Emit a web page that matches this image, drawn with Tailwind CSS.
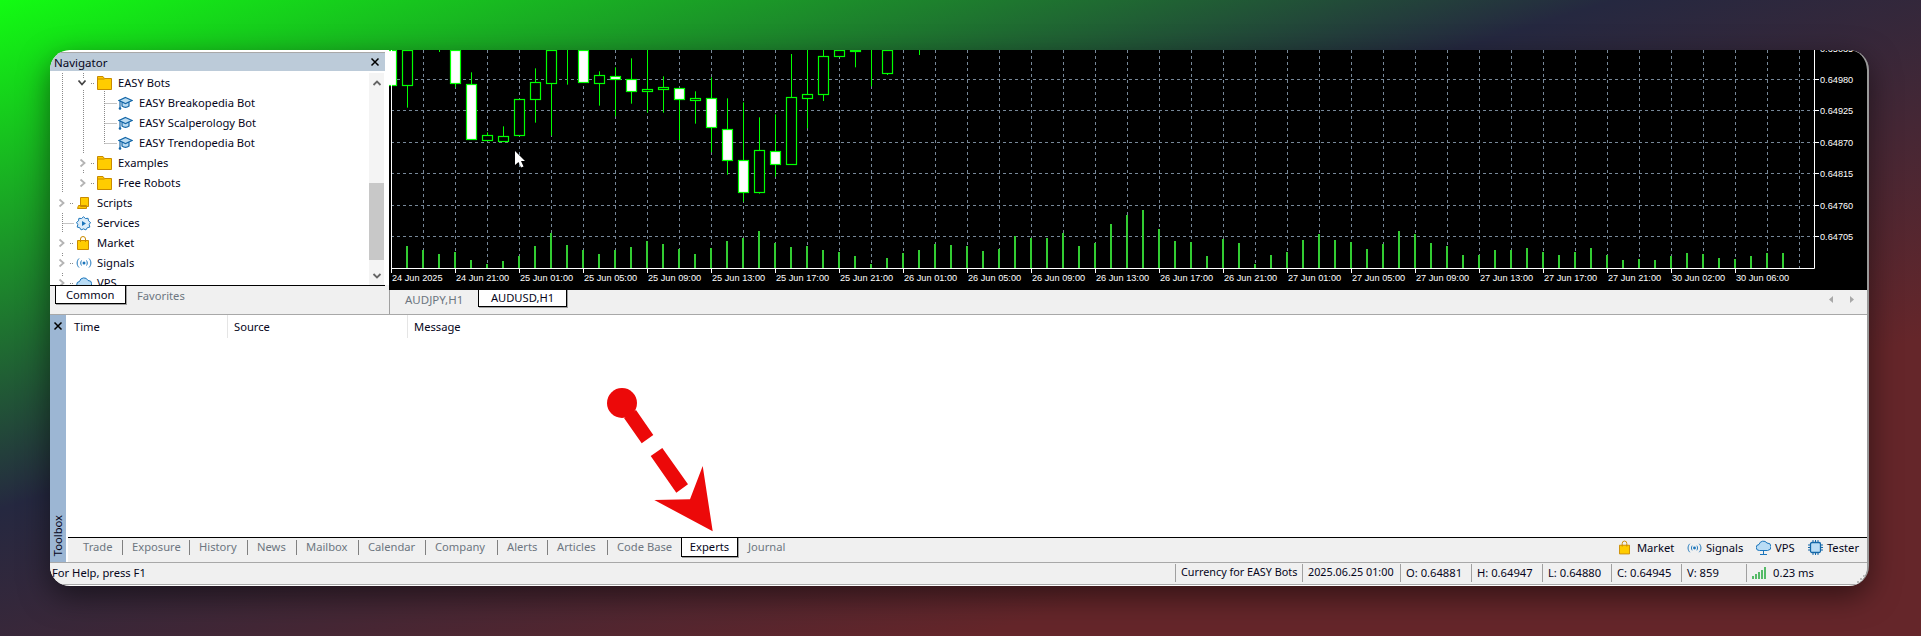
<!DOCTYPE html>
<html lang="en">
<head>
    <meta charset="UTF-8">
    <title>MetaTrader Experts Tab</title>
    <script src="https://cdn.jsdelivr.net/npm/@tailwindcss/browser@4"></script>
</head>
<body class="w-[1921px] h-[636px] overflow-hidden pt-[50px] pl-[50px] font-['Noto_Sans',sans-serif] text-[11.2px] leading-none text-[#05051a] bg-[linear-gradient(162.5deg,#12fc12_0%,#252840_41%,#65262a_76%,#65262a_100%)]">

    <div class="relative w-[1819px] h-[536px] rounded-[20px] overflow-hidden bg-white flex flex-col border-r-2 border-[#9a9a9a] shadow-[0_10px_30px_rgba(0,0,0,0.5)]">

        <!-- top: navigator + chart -->
        <div class="flex h-[264px]">
            <div class="w-[335px] flex flex-col pt-[2px] shrink-0">
                <div class="border-t border-[#a8a8a8] h-[19px] bg-[#bccbd9] flex items-center justify-between pl-[4px] pr-[5px]">
                    <span class="text-[11.5px] mt-px">Navigator</span>
                    <svg class="w-[10px] h-[10px]" viewBox="0 0 10 10"><path d="M1.500 1.500l7 7M8.500 1.500l-7 7" stroke="#000" stroke-width="1.500"/></svg>
                </div>
                <div class="relative h-[212px] flex overflow-hidden mt-[2px]">
                    <div class="flex-1 flex flex-col">
                        <div class="h-5 flex items-center pl-[27px] shrink-0">
                            <svg class="w-[10px] h-[8px] mr-[10px]" viewBox="0 0 10 8"><path d="M1.500 1.500L5 5.500l3.500-4" fill="none" stroke="#444" stroke-width="1.800"/></svg>
                            <svg class="w-[15px] h-[14px] mr-[6px]" viewBox="0 0 15 14"><path d="M.5 13.500V.5h5.500l1.500 2h7v11zM.5 3h7" fill="#ffcc00" stroke="#c98a00"/></svg>
                            <span>EASY Bots</span>
                        </div>
                        <div class="h-5 flex items-center pl-[68px] shrink-0">
                            <svg class="w-[15px] h-[14px] mr-[6px]" viewBox="0 0 15 14"><path d="M7.500 1.500l6.500 3-6.500 3-6.500-3zM4 6.500v3.500c2 1.500 5 1.500 7 0V6.500M2 5v7" fill="#bcdcf2" stroke="#1467a8" stroke-width="1.200"/><circle cx="2" cy="12.500" r="1.300" fill="#1467a8"/></svg>
                            <span>EASY Breakopedia Bot</span>
                        </div>
                        <div class="h-5 flex items-center pl-[68px] shrink-0">
                            <svg class="w-[15px] h-[14px] mr-[6px]" viewBox="0 0 15 14"><path d="M7.500 1.500l6.500 3-6.500 3-6.500-3zM4 6.500v3.500c2 1.500 5 1.500 7 0V6.500M2 5v7" fill="#bcdcf2" stroke="#1467a8" stroke-width="1.200"/><circle cx="2" cy="12.500" r="1.300" fill="#1467a8"/></svg>
                            <span>EASY Scalperology Bot</span>
                        </div>
                        <div class="h-5 flex items-center pl-[68px] shrink-0">
                            <svg class="w-[15px] h-[14px] mr-[6px]" viewBox="0 0 15 14"><path d="M7.500 1.500l6.500 3-6.500 3-6.500-3zM4 6.500v3.500c2 1.500 5 1.500 7 0V6.500M2 5v7" fill="#bcdcf2" stroke="#1467a8" stroke-width="1.200"/><circle cx="2" cy="12.500" r="1.300" fill="#1467a8"/></svg>
                            <span>EASY Trendopedia Bot</span>
                        </div>
                        <div class="h-5 flex items-center pl-[29px] shrink-0">
                            <svg class="w-[8px] h-[10px] mr-[10px]" viewBox="0 0 8 10"><path d="M1.500 1.500L5.500 5l-4 3.500" fill="none" stroke="#b4b4b4" stroke-width="1.800"/></svg>
                            <svg class="w-[15px] h-[14px] mr-[6px]" viewBox="0 0 15 14"><path d="M.5 13.500V.5h5.500l1.500 2h7v11zM.5 3h7" fill="#ffcc00" stroke="#c98a00"/></svg>
                            <span>Examples</span>
                        </div>
                        <div class="h-5 flex items-center pl-[29px] shrink-0">
                            <svg class="w-[8px] h-[10px] mr-[10px]" viewBox="0 0 8 10"><path d="M1.500 1.500L5.500 5l-4 3.500" fill="none" stroke="#b4b4b4" stroke-width="1.800"/></svg>
                            <svg class="w-[15px] h-[14px] mr-[6px]" viewBox="0 0 15 14"><path d="M.5 13.500V.5h5.500l1.500 2h7v11zM.5 3h7" fill="#ffcc00" stroke="#c98a00"/></svg>
                            <span>Free Robots</span>
                        </div>
                        <div class="h-5 flex items-center pl-[8px] shrink-0">
                            <svg class="w-[8px] h-[10px] mr-[11px]" viewBox="0 0 8 10"><path d="M1.500 1.500L5.500 5l-4 3.500" fill="none" stroke="#b4b4b4" stroke-width="1.800"/></svg>
                            <svg class="w-[12px] h-[12px] mr-[8px]" viewBox="0 0 12 12"><path d="M3.500.5h8v9h-8zM.5 11.500l1-3h8v3z" fill="#ffcc00" stroke="#c98a00" stroke-linejoin="round"/></svg>
                            <span>Scripts</span>
                        </div>
                        <div class="h-5 flex items-center pl-[26px] shrink-0">
                            <svg class="w-[15px] h-[15px] mr-[6px]" viewBox="0 0 15 15"><path d="M7.500 .8l2 1.700 2.600-.2.400 2.500 2 1.700-1.300 2 .6 2.600-2.500.6-1.400 2.200-2.400-1-2.400 1-1.400-2.200-2.500-.6.600-2.600-1.300-2 2-1.700.4-2.500 2.600.2z" fill="#dcedf9" stroke="#1b75bb"/><path d="M6 5v5l4-2.500z" fill="#1b75bb"/></svg>
                            <span>Services</span>
                        </div>
                        <div class="h-5 flex items-center pl-[8px] shrink-0">
                            <svg class="w-[8px] h-[10px] mr-[11px]" viewBox="0 0 8 10"><path d="M1.500 1.500L5.500 5l-4 3.500" fill="none" stroke="#b4b4b4" stroke-width="1.800"/></svg>
                            <svg class="w-[12px] h-[14px] mr-[8px]" viewBox="0 0 12 14"><path d="M.5 4.500h11v9H.5z" fill="#ffcc00" stroke="#c98a00"/><path d="M3.500 6V3a2.500 2.500 0 015 0v3" fill="none" stroke="#c98a00"/></svg>
                            <span>Market</span>
                        </div>
                        <div class="h-5 flex items-center pl-[8px] shrink-0">
                            <svg class="w-[8px] h-[10px] mr-[10px]" viewBox="0 0 8 10"><path d="M1.500 1.500L5.500 5l-4 3.500" fill="none" stroke="#b4b4b4" stroke-width="1.800"/></svg>
                            <svg class="w-[16px] h-[10px] mr-[5px]" viewBox="0 0 16 10"><path d="M3 .5C.5 3 .5 7 3 9.500M5.500 2.500c-1 1.500-1 3.500 0 5M13 .5c2.500 2.500 2.500 6.500 0 9M10.500 2.500c1 1.500 1 3.500 0 5" fill="none" stroke="#1b75bb"/><circle cx="8" cy="5" r="1.500" fill="#1b75bb"/></svg>
                            <span>Signals</span>
                        </div>
                        <div class="h-5 flex items-center pl-[8px] shrink-0">
                            <svg class="w-[8px] h-[10px] mr-[10px]" viewBox="0 0 8 10"><path d="M1.500 1.500L5.500 5l-4 3.500" fill="none" stroke="#b4b4b4" stroke-width="1.800"/></svg>
                            <svg class="w-[16px] h-[14px] mr-[5px]" viewBox="0 0 16 14"><path d="M4 11.500a3 3 0 01-.5-6 4.500 4.500 0 018.500-1 3.500 3.500 0 01.500 7z" fill="#b9dcf5" stroke="#1b75bb"/></svg>
                            <span>VPS</span>
                        </div>
                    </div>

                    <!-- scrollbar -->
                    <div class="w-[15px] mr-px bg-[#f4f4f4] flex flex-col items-center shrink-0">
                        <svg class="w-[10px] h-[8px] mt-[6px] shrink-0" viewBox="0 0 10 8"><path d="M1.500 6L5 2.500 8.500 6" fill="none" stroke="#666" stroke-width="1.800"/></svg>
                        <div class="w-full h-[77px] bg-[#c8c8c8] mt-[96px] shrink-0"></div>
                        <svg class="w-[10px] h-[8px] mt-auto mb-[5px] shrink-0" viewBox="0 0 10 8"><path d="M1.500 2L5 5.500 8.500 2" fill="none" stroke="#666" stroke-width="1.800"/></svg>
                    </div>

                    <!-- tree lines -->
                    <svg class="absolute left-0 top-0 w-[335px] h-[212px] pointer-events-none" viewBox="50 73 335 212">
                        <path d="M62.500 73V193M62.500 213V233M62.500 253V257M62.500 273V277M62.500 223.500H74M83.500 73V78M83.500 90V153M83.500 170V174M104.500 91V143.500M104.500 103.500H117M104.500 123.500H117M104.500 143.500H117M91 83.500H94M91 163.500H94M91 183.500H94M70 203.500H73M70 243.500H73M70 263.500H73M70 283.500H73" stroke="#8a8a8a" stroke-dasharray="1 1" fill="none"/>
                    </svg>
                </div>
                <div class="h-[29px] border-t border-black bg-[#f0f0f0] flex items-start pl-[5px] shrink-0">
                    <div class="w-[71px] h-[19px] -mt-px bg-white border border-black shadow-[1px_1px_0_#a0a0a0] pl-[10px] flex items-center">Common</div>
                    <div class="pl-[11px] h-[19px] flex items-center text-[#6d7680]">Favorites</div>
                </div>
            </div>

            <div class="w-[4px] shrink-0 flex flex-col">
                <div class="flex-1"></div>
                <div class="h-[29px] bg-[#f0f0f0]"></div>
            </div>

            <!-- chart + chart tabs -->
            <div class="flex-1 flex flex-col min-w-0">
                <div class="h-[240px] bg-black overflow-hidden shrink-0">
                    <svg id="chart" class="block" width="1478" height="240" viewBox="389 50 1478 240"></svg>
                </div>
                <div class="flex-1 bg-[#f0f0f0] border-l border-[#a0a0a0] flex items-start relative">
                    <span class="ml-[15px] mt-[4px] text-[#6d7680] w-[73px] text-[11.5px]">AUDJPY,H1</span>
                    <div class="w-[89px] h-[18px] -mt-px bg-white border border-black shadow-[1px_1px_0_#a0a0a0] flex items-center justify-center">AUDUSD,H1</div>
                    <div class="ml-auto flex gap-[17px] mr-[13px] mt-[6px]">
                        <svg class="w-[4px] h-[7px]" viewBox="0 0 4 7"><path d="M4 0v7L0 3.500z" fill="#a8a8a8"/></svg>
                        <svg class="w-[4px] h-[7px]" viewBox="0 0 4 7"><path d="M0 0v7l4-3.500z" fill="#a8a8a8"/></svg>
                    </div>
                </div>
            </div>
        </div>

        <!-- toolbox -->
        <div class="flex h-[248px] border-t border-[#a8a8a8] shrink-0">
            <div class="w-[16px] bg-[#9cb6d3] flex flex-col items-center justify-between shrink-0">
                <svg class="w-[10px] h-[10px] mt-[6px]" viewBox="0 0 10 10"><path d="M1.500 1.500l7 7M8.500 1.500l-7 7" stroke="#000" stroke-width="1.500"/></svg>
                <span class="[writing-mode:vertical-rl] rotate-180 mb-[6px]">Toolbox</span>
            </div>
            <div class="flex-1 flex flex-col min-w-0">
                <div class="h-[23px] flex items-center shrink-0">
                    <span class="w-[162px] h-full flex items-center pl-[8px] border-r border-[#e5e5e5]">Time</span>
                    <span class="w-[180px] h-full flex items-center pl-[6px] border-r border-[#e5e5e5]">Source</span>
                    <span class="pl-[6px]">Message</span>
                </div>
                <div class="flex-1"></div>
                <div class="h-[25px] ml-[2px] border-t border-black bg-[#f0f0f0] flex items-start shrink-0 pl-[15px] pt-px text-[#6d7680]">
                    <span class="w-[39px] h-[15px] flex items-center">Trade</span><i class="w-px h-[15px] mt-px bg-[#808080] mr-[9px]"></i>
                    <span class="w-[57px] h-[15px] flex items-center">Exposure</span><i class="w-px h-[15px] mt-px bg-[#808080] mr-[9px]"></i>
                    <span class="w-[48px] h-[15px] flex items-center">History</span><i class="w-px h-[15px] mt-px bg-[#808080] mr-[9px]"></i>
                    <span class="w-[39px] h-[15px] flex items-center">News</span><i class="w-px h-[15px] mt-px bg-[#808080] mr-[9px]"></i>
                    <span class="w-[52px] h-[15px] flex items-center">Mailbox</span><i class="w-px h-[15px] mt-px bg-[#808080] mr-[9px]"></i>
                    <span class="w-[57px] h-[15px] flex items-center">Calendar</span><i class="w-px h-[15px] mt-px bg-[#808080] mr-[9px]"></i>
                    <span class="w-[62px] h-[15px] flex items-center">Company</span><i class="w-px h-[15px] mt-px bg-[#808080] mr-[9px]"></i>
                    <span class="w-[40px] h-[15px] flex items-center">Alerts</span><i class="w-px h-[15px] mt-px bg-[#808080] mr-[9px]"></i>
                    <span class="w-[50px] h-[15px] flex items-center">Articles</span><i class="w-px h-[15px] mt-px bg-[#808080] mr-[9px]"></i>
                    <span class="w-[64px] h-[15px] flex items-center">Code Base</span>
                    <div class="w-[57px] h-[20px] -mt-[2px] bg-white border border-black shadow-[1px_1px_0_#a0a0a0] flex items-center justify-center text-[#05051a]">Experts</div>
                    <span class="ml-[10px] h-[15px] flex items-center">Journal</span>
                    <div class="ml-auto flex items-center h-[17px] text-[#05051a] pr-[8px]">
                        <svg class="w-[11px] h-[15px] mr-[7px]" viewBox="0 0 12 15"><path d="M.5 5h11v9.500H.5z" fill="#ffcc00" stroke="#c98a00"/><path d="M3.500 6.500V3a2.500 2.500 0 015 0v3.500" fill="none" stroke="#c98a00"/></svg>
                        <span class="w-[50px]">Market</span>
                        <svg class="w-[15px] h-[10px] mr-[4px]" viewBox="0 0 16 10"><path d="M3 .5C.5 3 .5 7 3 9.500M5.500 2.500c-1 1.500-1 3.500 0 5M13 .5c2.500 2.500 2.500 6.500 0 9M10.500 2.500c1 1.500 1 3.500 0 5" fill="none" stroke="#1b75bb"/><circle cx="8" cy="5" r="1.500" fill="#1b75bb"/></svg>
                        <span class="w-[50px]">Signals</span>
                        <svg class="w-[15px] h-[16px] mr-[4px]" viewBox="0 0 15 16"><path d="M3.500 10.500a3 3 0 01-.5-6 4.500 4.500 0 018-1.500 3.500 3.500 0 01.500 7.500zM7.500 10.500v4M4 14.500h7" fill="#b9dcf5" stroke="#1b75bb"/></svg>
                        <span class="w-[33px]">VPS</span>
                        <svg class="w-[15px] h-[15px] mr-[4px]" viewBox="0 0 15 15"><rect x="2.500" y="2.500" width="10" height="10" rx="1.500" fill="#b9dcf5" stroke="#1467a8" stroke-width="1.300"/><path d="M5 0v2M7.500 0v2M10 0v2M5 13v2M7.500 13v2M10 13v2M0 5h2M0 7.500h2M0 10h2M13 5h2M13 7.500h2M13 10h2" stroke="#1467a8"/></svg>
                        <span>Tester</span>
                    </div>
                </div>
            </div>
        </div>

        <!-- status bar -->
        <div class="relative h-[22px] border-t border-[#a8a8a8] bg-[#f0f0f0] flex items-center pb-[2px] shrink-0">
            <span class="w-[1125px] pl-[2px]">For Help, press F1</span>
            <span class="w-[127px] h-[18px] pl-[5px] border-l border-[#a0a0a0] flex items-center overflow-hidden whitespace-nowrap text-[10.8px]">Currency for EASY Bots</span>
            <span class="w-[98px] h-[18px] pl-[5px] border-l border-[#a0a0a0] flex items-center whitespace-nowrap text-[10.8px]">2025.06.25 01:00</span>
            <span class="w-[71px] h-[18px] pl-[5px] border-l border-[#a0a0a0] flex items-center">O: 0.64881</span>
            <span class="w-[71px] h-[18px] pl-[5px] border-l border-[#a0a0a0] flex items-center">H: 0.64947</span>
            <span class="w-[69px] h-[18px] pl-[5px] border-l border-[#a0a0a0] flex items-center">L: 0.64880</span>
            <span class="w-[70px] h-[18px] pl-[5px] border-l border-[#a0a0a0] flex items-center">C: 0.64945</span>
            <span class="w-[65px] h-[18px] pl-[5px] border-l border-[#a0a0a0] flex items-center">V: 859</span>
            <span class="h-[18px] pl-[5px] border-l border-[#a0a0a0] flex items-center">
                <svg class="w-[15px] h-[12px] mr-[6px]" viewBox="0 0 15 12"><path d="M1 9v3M4 7v5M7 5v7M10 3v9M13 0v12" stroke="#22a83a" stroke-width="1.500"/></svg>
                0.23 ms
            </span>
            <svg class="absolute right-[2px] bottom-px w-[8px] h-[8px]" viewBox="0 0 8 8"><path d="M6 0h2v2H6zM3 3h2v2H3zM6 3h2v2H6zM0 6h2v2H0zM3 6h2v2H3zM6 6h2v2H6z" fill="#b8b8b8"/></svg>
        </div>
        <div class="h-[1px] bg-[#a8a8a8] shrink-0"></div>

        <!-- red annotation arrow -->
        <svg class="absolute left-0 top-0 w-[1819px] h-[536px] pointer-events-none" viewBox="50 50 1819 536">
            <circle cx="622" cy="403" r="15" fill="#ec0909"/>
            <path d="M624 418L636 410L653.300 435L641.700 443.300zM662.300 448L650.700 456L676.300 492.700L688 484.300zM702.700 466L712.700 531.300L654.300 500L690 499.300z" fill="#ec0909"/>
        </svg>
    </div>

    <script>
        // all y values are read off the reference, as zoomed 3x from y=40
        const Y = z => 40 + z / 3;
        const candles = [
            [0,30,30,30,136,1],[1,30,203,30,136,0],[3,30,36],[4,30,142,30,130,1],[5,97,298,133,298,1],
            [6,277,301,286,301,0],[7,259,304,289,304,0],[8,178,286,178,286,0],[9,85,248,127,178,0],
            [10,30,287,30,130,0],[11,30,134],[12,30,127,30,127,1],[13,94,197,106,130,0],[14,82,229,109,118,1],
            [15,55,191,118,154,1],[16,30,218,148,154,0],[17,109,218,142,148,0],[18,145,300,145,178,1],
            [19,154,251,175,181,0],[20,112,337,175,262,1],[21,175,404,268,361,1],[22,187,485,361,457,1],
            [23,232,461,331,457,0],[24,223,410,334,373,1],[25,42,373,172,373,0],[26,30,265,163,175,0],
            [27,30,183,49,163,0],[28,30,49,30,49,0],[29,30,82,30,32,0],[30,30,139],[31,30,105,30,100,0],[33,30,45]
        ];
        const volumes = [618,630,642,636,660,672,663,648,618,579,615,630,642,630,621,603,612,627,642,624,603,594,573,609,621,618,630,636,648,
            672,654,639,630,612,615,618,633,627,588,594,594,579,618,609,552,525,510,567,603,606,648,597,609,672,645,636,600,582,600,
            606,627,612,573,582,609,618,645,645,630,630,624,636,645,636,624,645,660,657,660,648,639,642,654,657,648,639,639];
        const timeLabels = ['24 Jun 2025','24 Jun 21:00','25 Jun 01:00','25 Jun 05:00','25 Jun 09:00','25 Jun 13:00','25 Jun 17:00','25 Jun 21:00',
            '26 Jun 01:00','26 Jun 05:00','26 Jun 09:00','26 Jun 13:00','26 Jun 17:00','26 Jun 21:00','27 Jun 01:00','27 Jun 05:00','27 Jun 09:00',
            '27 Jun 13:00','27 Jun 17:00','27 Jun 21:00','30 Jun 02:00','30 Jun 06:00'];
        const prices = [[48,'0.65035'],[79,'0.64980'],[110,'0.64925'],[142,'0.64870'],[173,'0.64815'],[205,'0.64760'],[236,'0.64705']];
        const font = 'font-family="Liberation Sans" font-size="9.200" fill="#fff"';

        let svg = '';
        // grid
        for (const [y] of prices) svg += `<path d="M391 ${y + .5}H1814" stroke="#778899" stroke-dasharray="3 3"/>`;
        for (let x = 423; x < 1810; x += 32) svg += `<path d="M${x + .5} 50V268" stroke="#778899" stroke-dasharray="3 3"/>`;
        // volumes
        volumes.forEach((top, i) => {
            const x = 407 + 16 * i;
            svg += `<rect x="${x - 1}" y="${Y(top)}" width="2" height="${268 - Y(top)}" fill="#32cd32"/>`;
        });
        // candles
        for (const [k, hi, lo, top, bottom, down] of candles) {
            const x = 391 + 16 * k;
            if (hi !== lo) svg += `<path d="M${x + .5} ${Y(hi)}V${Y(lo)}" stroke="#00ff00"/>`;
            if (top !== undefined) {
                svg += `<rect x="${x - 5 + .5}" y="${Math.round(Y(top)) + .5}" width="10" height="${Math.round(Y(bottom) - Y(top))}" fill="${down ? '#fff' : '#000'}" stroke="#00ff00" stroke-width="1.200"/>`;
            }
        }
        // axes
        svg += '<path d="M391.500 50V268.500H1814.500V50" fill="none" stroke="#fff"/>';
        timeLabels.forEach((label, i) => {
            const x = 391 + 64 * i;
            svg += `<path d="M${x + .5} 268V273" stroke="#fff"/><text x="${x + 1}" y="281" ${font}>${label}</text>`;
        });
        for (const [y, price] of prices) {
            svg += `<path d="M1814 ${y + .5}H1819" stroke="#fff"/><text x="1820" y="${y + 4}" ${font}>${price}</text>`;
        }
        // mouse pointer
        svg += '<path d="M515 151V165L518.500 162L521 167.500L523.500 166.500L521 161H525z" fill="#fff"/>';
        document.getElementById('chart').innerHTML = svg;
    </script>
</body>
</html>
